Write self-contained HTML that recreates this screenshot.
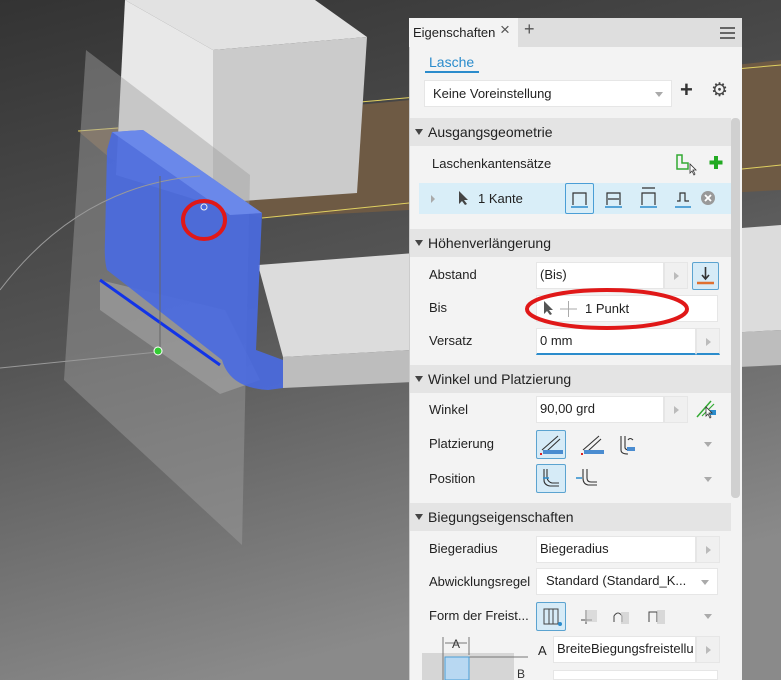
<!DOCTYPE html>
<html style="overflow:hidden;width:781px;height:680px"><head><meta charset="utf-8"><style>
*{margin:0;padding:0;box-sizing:border-box}
body{width:781px;height:680px;overflow:hidden;position:relative;font-family:"Liberation Sans",sans-serif;font-size:13px;color:#222;background:#555}
.a{position:absolute}
.t{position:absolute;white-space:nowrap;line-height:16px;font-size:13px}
.hd{position:absolute;left:410px;width:321px;height:28px;background:#e4e4e4;font-size:14px;line-height:28px;padding-left:18px;color:#222}
.hd:before{content:"";position:absolute;left:5px;top:11px;border-left:4px solid transparent;border-right:4px solid transparent;border-top:6px solid #444}
.in{position:absolute;background:#fff;border:1px solid #e6e6e6;line-height:24px;padding-left:3px;white-space:nowrap;overflow:hidden;font-size:13px}
.ar{position:absolute;width:24px;background:#f0f0f0;border:1px solid #e6e6e6}
.ar:after{content:"";position:absolute;left:9px;top:9px;border-top:4px solid transparent;border-bottom:4px solid transparent;border-left:5px solid #bbb}
.dd:after{content:"";position:absolute;right:8px;top:11px;border-left:4px solid transparent;border-right:4px solid transparent;border-top:5px solid #aaa}
.tri{position:absolute;border-left:4px solid transparent;border-right:4px solid transparent;border-top:5px solid #aaa}
.sel{position:absolute;background:#d6ebf7;border:1px solid #5ba3d0;border-radius:2px}
</style></head><body>
<svg class="a" style="left:0;top:0" width="781" height="680">
<defs><linearGradient id="bg" x1="0" y1="0" x2="0.3" y2="1"><stop offset="0" stop-color="#333"/><stop offset="0.5" stop-color="#555"/><stop offset="1" stop-color="#8a8a8a"/></linearGradient></defs>
<rect width="781" height="680" fill="url(#bg)"/>
<polygon points="78,131 410,100 781,60 781,190 260,218 110,158" fill="#6e5a44"/>
<line x1="78" y1="131" x2="118" y2="128" stroke="#e0d060"/>
<line x1="360" y1="102" x2="781" y2="65" stroke="#e0d060"/>
<line x1="262" y1="218" x2="781" y2="165" stroke="#e0d060"/>
<polygon points="125,0 315,0 367,37 213,50" fill="#e2e2e2"/>
<polygon points="125,0 213,50 213,205 116,175" fill="#e8e8e8"/>
<polygon points="213,50 367,37 357,193 213,203" fill="#cbcbcb"/>
<polygon points="258,265 781,225 781,330 283,357" fill="#dcdcdc"/>
<polygon points="283,357 781,330 781,365 283,388" fill="#bdbdbd"/>
<polygon points="86,50 250,175 242,545 64,380" fill="#a0a0a0" opacity="0.45"/>
<polygon points="100,280 225,310 260,380 220,394 100,310" fill="#b0b0b0" opacity="0.5"/>
<path d="M112,132 L143,130 L262,213 L260,258 L256,350 L283,360 L283,388 L268,390 Q230,388 222,360 L107,270 Q104,260 105,240 L107,150 Z" fill="#4a6ae0" opacity="0.92"/>
<polygon points="112,132 143,130 262,213 230,215" fill="#6a88ea"/>
<line x1="100" y1="280" x2="220" y2="365" stroke="#1234e8" stroke-width="3"/>
<path d="M0,290 Q80,185 200,176" stroke="#999" fill="none" stroke-width="1"/>
<line x1="0" y1="368" x2="158" y2="352" stroke="#999"/>
<line x1="160" y1="176" x2="160" y2="350" stroke="#666"/>
<circle cx="158" cy="351" r="4" fill="#3c3" stroke="#fff"/>
<circle cx="204" cy="207" r="3" fill="#4a6ae0" stroke="#eee"/>
<ellipse cx="204" cy="220" rx="21" ry="19" fill="none" stroke="#e01818" stroke-width="4"/>
</svg>

<div class="a" style="left:409px;top:18px;width:333px;height:662px;background:#f3f3f3;border-left:1px solid #ccc;overflow:hidden">
</div>
<div class="a" style="left:409px;top:18px;width:333px;height:29px;background:#dedede"></div>
<div class="a" style="left:409px;top:18px;width:109px;height:29px;background:#f3f3f3"></div>
<div class="t" style="left:413px;top:25px">Eigenschaften</div>
<div class="t" style="left:500px;top:22px;font-size:17px;color:#555">×</div>
<div class="t" style="left:524px;top:21px;font-size:18px;color:#555">+</div>
<div class="a" style="left:720px;top:27px;width:15px;height:2px;background:#666;box-shadow:0 5px 0 #666,0 10px 0 #666"></div>
<div class="t" style="left:429px;top:54px;font-size:14px;color:#2b8ccc">Lasche</div>
<div class="a" style="left:425px;top:71px;width:54px;height:2px;background:#2b8ccc"></div>
<div class="in dd" style="left:424px;top:80px;width:248px;height:27px;padding-left:8px;line-height:26px">Keine Voreinstellung</div>
<div class="t" style="left:680px;top:82px;font-size:22px;color:#333;font-weight:bold">+</div>
<div class="t" style="left:711px;top:83px;font-size:19px;color:#444">⚙</div>
<div class="a" style="left:731px;top:118px;width:9px;height:380px;background:#d0d0d0;border-radius:4px"></div>

<div class="hd" style="top:118px">Ausgangsgeometrie</div>
<div class="t" style="left:432px;top:156px">Laschenkantensätze</div>
<svg class="a" style="left:674px;top:152px" width="50" height="24"><path d="M3,3 H8 V11 H14 V17 H3 Z" fill="none" stroke="#3a3" stroke-width="1.5"/><path d="M16,12 l0,9 l2,-2 l2,4 l1,-1 l-2,-4 h3z" fill="#fff" stroke="#333" stroke-width="0.8"/><rect x="40" y="4" width="4" height="13" fill="#2a2"/><rect x="35.5" y="8.5" width="13" height="4" fill="#2a2"/></svg>
<div class="a" style="left:419px;top:183px;width:312px;height:31px;background:#d9eef8"></div>
<div class="a" style="left:431px;top:195px;border-top:4px solid transparent;border-bottom:4px solid transparent;border-left:4px solid #aaa"></div>
<svg class="a" style="left:457px;top:190px" width="12" height="16"><path d="M2,1 L2,14 L5,11 L8,15 L10,14 L7,10 L11,10Z" fill="#444"/></svg>
<div class="t" style="left:478px;top:191px">1 Kante</div>
<div class="a" style="left:565px;top:183px;width:29px;height:31px;border:1px solid #4a9ed6;border-radius:2px"></div>
<svg class="a" style="left:565px;top:183px" width="155" height="31"><g stroke="#333" fill="none" stroke-width="1.2"><path d="M8,22 V10 H21 V22"/><path d="M42,22 V10 H55 V22 M43,16 H54"/><path d="M77,22 V10 H90 V22 M77,5 H90"/><path d="M112,18 H115 V10 H120 V18 H124"/></g><g stroke="#2b8ccc" stroke-width="1.5"><line x1="6" y1="24" x2="23" y2="24"/><line x1="40" y1="24" x2="57" y2="24"/><line x1="75" y1="24" x2="92" y2="24"/><line x1="110" y1="24" x2="126" y2="24"/></g><circle cx="143" cy="15" r="7" fill="#999"/><path d="M140,12 l6,6 M146,12 l-6,6" stroke="#fff" stroke-width="1.8"/></svg>

<div class="hd" style="top:229px">Höhenverlängerung</div>
<div class="t" style="left:429px;top:267px">Abstand</div>
<div class="in" style="left:536px;top:262px;width:128px;height:27px">(Bis)</div>
<div class="ar" style="left:664px;top:262px;height:27px"></div>
<div class="sel" style="left:692px;top:262px;width:27px;height:28px"></div>
<svg class="a" style="left:692px;top:262px" width="27" height="28"><path d="M13.5,5 V17 M10,13 l3.5,4 l3.5,-4" stroke="#333" stroke-width="1.6" fill="none"/><path d="M5,21 H22" stroke="#e07030" stroke-width="2.5"/></svg>
<div class="t" style="left:429px;top:300px">Bis</div>
<div class="in" style="left:536px;top:295px;width:182px;height:27px"></div>
<svg class="a" style="left:541px;top:299px" width="45" height="20"><path d="M3,2 L3,15 L6,12 L9,16 L11,15 L8,11 L12,11Z" fill="#555"/><path d="M19,10 H36 M27.5,2 V18" stroke="#aaa" stroke-width="1"/></svg>
<div class="t" style="left:585px;top:301px">1 Punkt</div>
<div class="t" style="left:429px;top:333px">Versatz</div>
<div class="in" style="left:536px;top:328px;width:160px;height:27px;border-bottom:2px solid #2b8ccc">0 mm</div>
<div class="ar" style="left:696px;top:328px;height:27px;border-bottom:2px solid #2b8ccc"></div>
<svg class="a" style="left:520px;top:285px" width="180" height="50"><ellipse cx="87" cy="24" rx="80" ry="19" fill="none" stroke="#e01818" stroke-width="4"/></svg>

<div class="hd" style="top:365px">Winkel und Platzierung</div>
<div class="t" style="left:429px;top:402px">Winkel</div>
<div class="in" style="left:536px;top:396px;width:128px;height:27px">90,00 grd</div>
<div class="ar" style="left:664px;top:396px;height:27px"></div>
<svg class="a" style="left:694px;top:397px" width="26" height="24"><path d="M3,20 L17,4" stroke="#3a3" stroke-width="1.5"/><path d="M8,19 L20,7" stroke="#3a3" stroke-width="1.2"/><rect x="16" y="13" width="6" height="5" fill="#2b8ccc"/><path d="M12,10 l0,9 l2,-2 l2,4 l1,-1 l-2,-4 h3z" fill="#fff" stroke="#333" stroke-width="0.8"/></svg>
<div class="t" style="left:429px;top:436px">Platzierung</div>
<div class="sel" style="left:536px;top:430px;width:30px;height:29px"></div>
<svg class="a" style="left:536px;top:430px" width="100" height="30"><g stroke="#333" fill="none" stroke-width="1.1"><path d="M6,20 L22,6 M11,21 L24,9"/><path d="M47,20 L63,6 M52,21 L65,9"/><path d="M85,6 V20 Q85,24 92,24 M89,6 V18 Q90,20 93,20 M92,10 Q94,7 97,10"/></g><rect x="7" y="20" width="20" height="4" fill="#4a8cd0"/><rect x="48" y="20" width="20" height="4" fill="#4a8cd0"/><rect x="91" y="17" width="8" height="4" fill="#4a8cd0"/><rect x="4" y="23" width="2" height="2" fill="#d22"/><rect x="45" y="23" width="2" height="2" fill="#d22"/></svg>
<div class="tri" style="left:704px;top:442px"></div>
<div class="t" style="left:429px;top:471px">Position</div>
<div class="sel" style="left:536px;top:464px;width:30px;height:29px"></div>
<svg class="a" style="left:536px;top:464px" width="70" height="30"><g stroke="#333" fill="none" stroke-width="1.1"><path d="M8,5 V16 Q8,21 14,22 H23 M11,5 V14 Q12,18 16,19 H23"/><path d="M47,5 V14 Q47,20 52,21 H61 M51,5 V14 Q51,18 55,18 H61"/></g><path d="M7,14 l6,0" stroke="#2b8ccc" stroke-width="1.5"/><path d="M40,14 l6,0" stroke="#2b8ccc" stroke-width="1.5"/></svg>
<div class="tri" style="left:704px;top:477px"></div>

<div class="hd" style="top:503px">Biegungseigenschaften</div>
<div class="t" style="left:429px;top:541px">Biegeradius</div>
<div class="in" style="left:536px;top:536px;width:160px;height:27px">Biegeradius</div>
<div class="ar" style="left:696px;top:536px;height:27px"></div>
<div class="t" style="left:429px;top:574px">Abwicklungsregel</div>
<div class="in dd" style="left:536px;top:568px;width:182px;height:27px;padding-left:9px">Standard (Standard_K...</div>
<div class="t" style="left:429px;top:608px">Form der Freist...</div>
<div class="sel" style="left:536px;top:602px;width:30px;height:29px"></div>
<svg class="a" style="left:536px;top:602px" width="140" height="30"><g stroke="#444" fill="none" stroke-width="1"><rect x="8" y="7" width="14" height="15"/><path d="M13,7 V22 M17,7 V22"/><path d="M45,18 H56 M50,8 V22"/><path d="M78,20 V14 Q82,8 86,14 V20"/><path d="M113,20 V10 H121 V20"/></g><rect x="49" y="8" width="12" height="12" fill="#ccc" opacity="0.6"/><rect x="85" y="10" width="8" height="12" fill="#ccc" opacity="0.7"/><rect x="121" y="8" width="8" height="14" fill="#ccc" opacity="0.7"/><circle cx="24" cy="22" r="2" fill="#2b8ccc"/></svg>
<div class="tri" style="left:704px;top:614px"></div>
<svg class="a" style="left:418px;top:633px" width="110" height="47"><rect x="4" y="20" width="92" height="27" fill="#d6d6d6"/><path d="M25,4 V47 M51,4 V22 M27,10 H49 M51,24 H110" stroke="#777" fill="none" stroke-width="1"/><rect x="27" y="24" width="24" height="23" fill="#b8d8f2" stroke="#4a9ed6"/><text x="34" y="15" font-size="12" font-family="Liberation Sans" fill="#333">A</text><text x="99" y="45" font-size="12" font-family="Liberation Sans" fill="#333">B</text></svg>
<div class="t" style="left:538px;top:643px">A</div>
<div class="in" style="left:553px;top:636px;width:143px;height:27px">BreiteBiegungsfreistellu</div>
<div class="ar" style="left:696px;top:636px;height:27px"></div>
<div class="in" style="left:553px;top:670px;width:165px;height:10px;color:#444"></div>
</body></html>
